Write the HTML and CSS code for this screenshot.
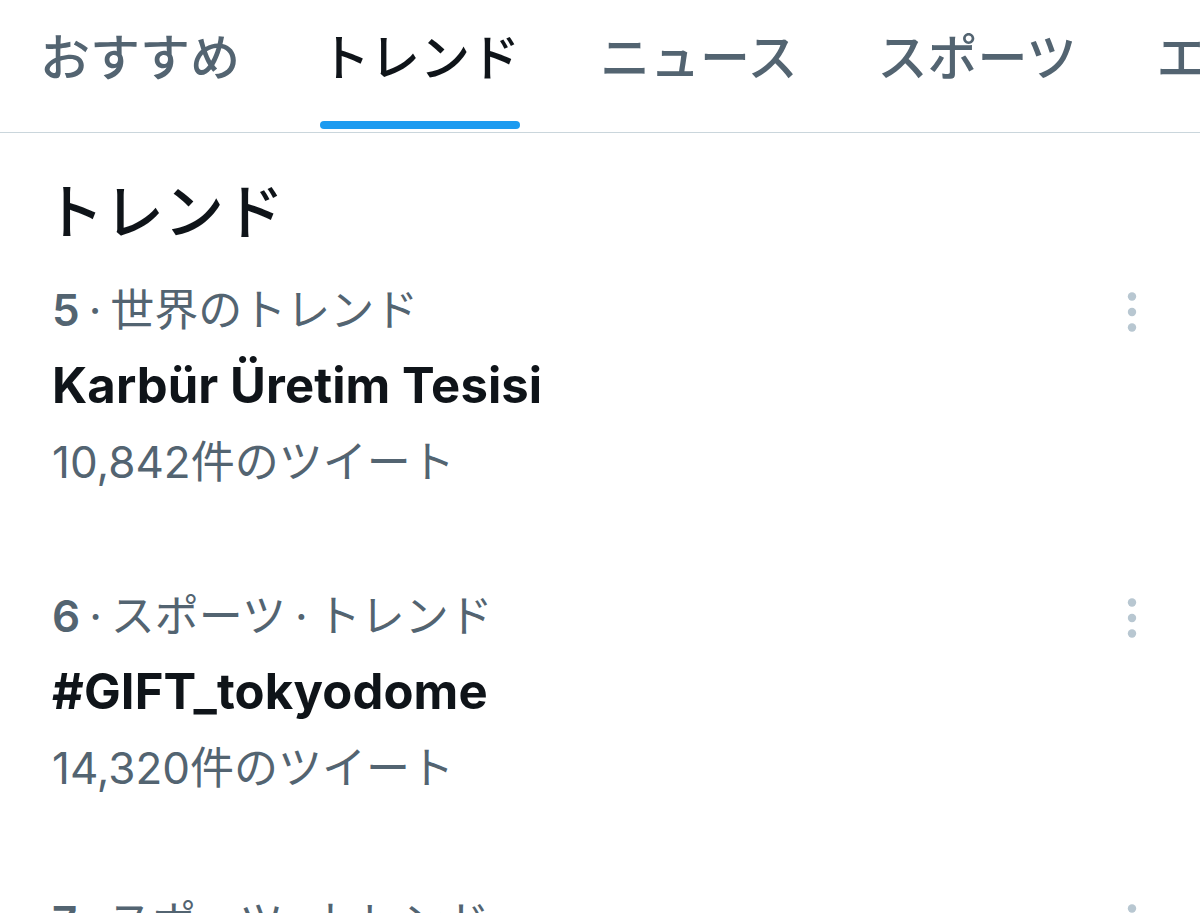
FILE: index.html
```html
<!DOCTYPE html>
<html lang="ja">
<head>
<meta charset="utf-8">
<title>トレンド</title>
<link rel="stylesheet" href="styles.css">
</head>
<body>
<div class="page">
  <nav class="tabs">
    <div class="tab"><span class="tab-label">おすすめ</span><span class="tab-bar"></span></div>
    <div class="tab active"><span class="tab-label">トレンド</span><span class="tab-bar"></span></div>
    <div class="tab"><span class="tab-label">ニュース</span><span class="tab-bar"></span></div>
    <div class="tab"><span class="tab-label">スポーツ</span><span class="tab-bar"></span></div>
    <div class="tab"><span class="tab-label">エンタメ</span><span class="tab-bar"></span></div>
  </nav>

  <h2 class="section-title">トレンド</h2>

  <ul class="trends">
    <li class="trend">
      <div class="trend-head">
        <span class="trend-meta"><span class="rank">5</span><span class="sep">·</span>世界のトレンド</span>
        <svg class="more" width="10" height="40" viewBox="0 0 10 40" aria-hidden="true">
          <circle cx="5" cy="4.5" r="4.2"/><circle cx="5" cy="20" r="4.2"/><circle cx="5" cy="35.5" r="4.2"/>
        </svg>
      </div>
      <div class="trend-name">Karbür Üretim Tesisi</div>
      <div class="trend-count">10,842件のツイート</div>
    </li>
    <li class="trend">
      <div class="trend-head">
        <span class="trend-meta"><span class="rank">6</span><span class="sep">·</span>スポーツ<span class="sep">·</span>トレンド</span>
        <svg class="more" width="10" height="40" viewBox="0 0 10 40" aria-hidden="true">
          <circle cx="5" cy="4.5" r="4.2"/><circle cx="5" cy="20" r="4.2"/><circle cx="5" cy="35.5" r="4.2"/>
        </svg>
      </div>
      <div class="trend-name">#GIFT_tokyodome</div>
      <div class="trend-count">14,320件のツイート</div>
    </li>
    <li class="trend">
      <div class="trend-head">
        <span class="trend-meta"><span class="rank">7</span><span class="sep">·</span>スポーツ<span class="sep">·</span>トレンド</span>
        <svg class="more" width="10" height="40" viewBox="0 0 10 40" aria-hidden="true">
          <circle cx="5" cy="4.5" r="4.2"/><circle cx="5" cy="20" r="4.2"/><circle cx="5" cy="35.5" r="4.2"/>
        </svg>
      </div>
      <div class="trend-name">#スポーツ</div>
      <div class="trend-count">8,000件のツイート</div>
    </li>
  </ul>
</div>
</body>
</html>
```

FILE: styles.css
```css
html, body {
  margin: 0;
  padding: 0;
  background: #ffffff;
}

body {
  width: 1200px;
  height: 913px;
  overflow: hidden;
  font-family: "Inter", "Noto Sans CJK JP", sans-serif;
  color: #0f1419;
}

.page {
  width: 1200px;
}

.tabs {
  display: flex;
  height: 132px;
  border-bottom: 1.5px solid #cad6dc;
  overflow: hidden;
  white-space: nowrap;
}

.tab {
  flex: 0 0 auto;
  display: flex;
  flex-direction: column;
  align-items: stretch;
  padding: 0 40px;
}

.tab-label {
  display: block;
  height: 114px;
  line-height: 108px;
  font-family: "Noto Sans CJK JP", sans-serif;
  font-size: 50px;
  font-weight: 500;
  color: #536471;
}

.tab.active .tab-label {
  color: #0f1419;
}

.tab-bar {
  display: block;
  height: 8px;
  margin-top: 7px;
  border-radius: 4px;
  background: transparent;
}

.tab.active .tab-bar {
  background: #1d9bf0;
}

.section-title {
  margin: 0;
  padding: 25px 0 0 44px;
  height: 100px;
  line-height: 100px;
  font-family: "Noto Sans CJK JP", sans-serif;
  font-size: 60px;
  font-weight: 500;
  color: #0f1419;
}

.trends {
  list-style: none;
  margin: 0;
  padding: 0;
}

.trend {
  padding: 14px 63px 64px 52px;
}

.trend-head {
  display: flex;
  align-items: center;
  justify-content: space-between;
  height: 76px;
}

.trend-meta {
  font-size: 44px;
  line-height: 76px;
  font-weight: 400;
  color: #536471;
  white-space: nowrap;
}

.rank {
  font-weight: 600;
}

.sep {
  margin: 0 9px;
}

.more {
  fill: #b8c7d1;
  margin-top: 4px;
}

.trend-name {
  font-size: 49px;
  line-height: 76px;
  font-weight: 700;
  color: #0f1419;
  letter-spacing: 0.1px;
}

.trend-count {
  font-size: 44px;
  line-height: 76px;
  font-weight: 400;
  color: #536471;
}
```
